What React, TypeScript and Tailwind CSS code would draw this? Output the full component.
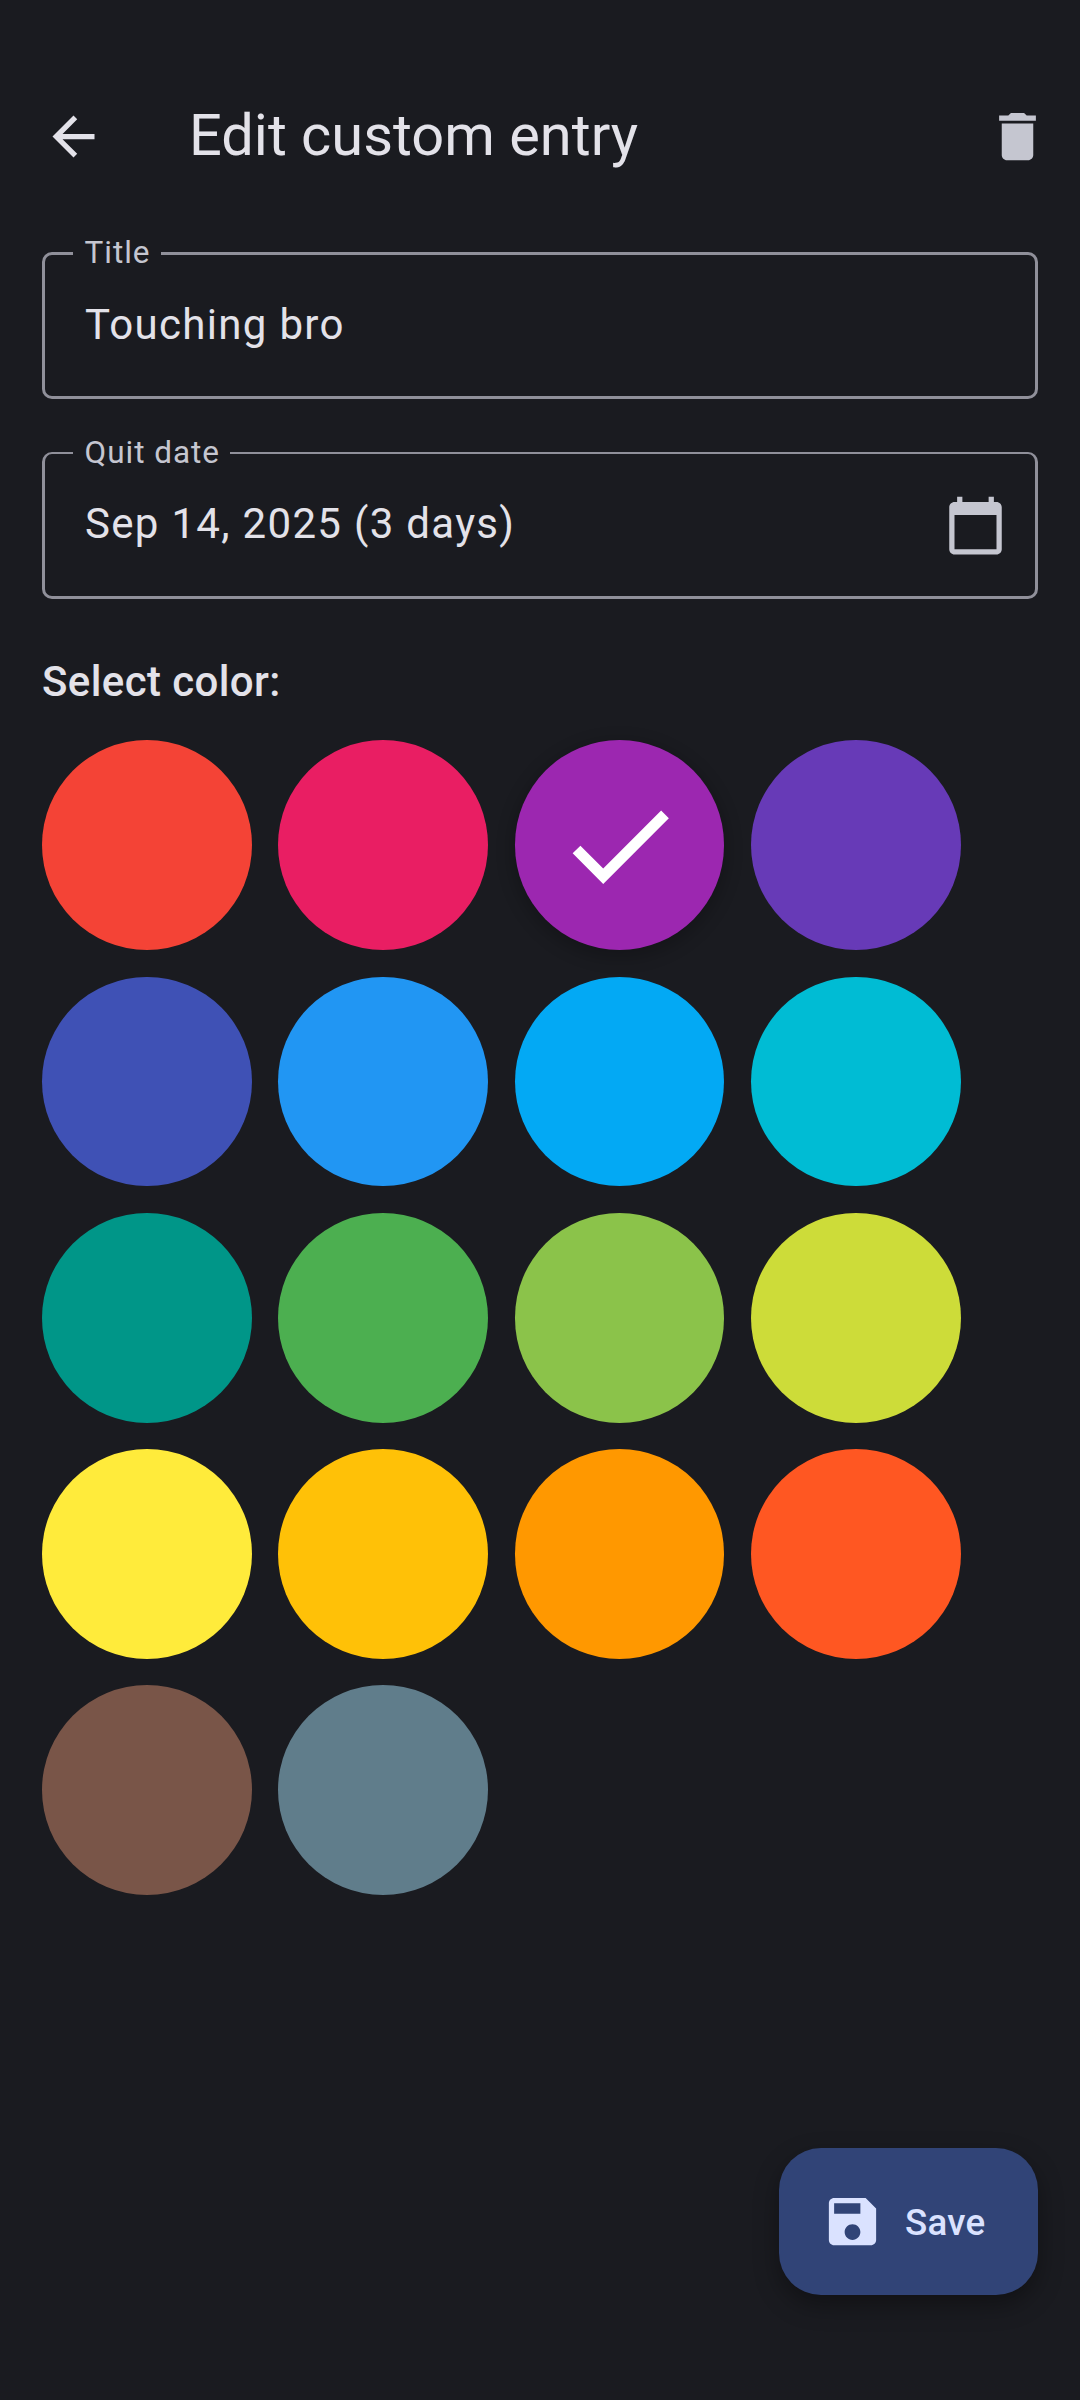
import type { ReactNode } from "react";

const swatches = [
  { name: "Red", color: "bg-[#f44336]" },
  { name: "Pink", color: "bg-[#e91e63]" },
  { name: "Purple", color: "bg-[#9c27b0]" },
  { name: "Deep purple", color: "bg-[#673ab7]" },
  { name: "Indigo", color: "bg-[#3f51b5]" },
  { name: "Blue", color: "bg-[#2196f3]" },
  { name: "Light blue", color: "bg-[#03a9f4]" },
  { name: "Cyan", color: "bg-[#00bcd4]" },
  { name: "Teal", color: "bg-[#009688]" },
  { name: "Green", color: "bg-[#4caf50]" },
  { name: "Light green", color: "bg-[#8bc34a]" },
  { name: "Lime", color: "bg-[#cddc39]" },
  { name: "Yellow", color: "bg-[#ffeb3b]" },
  { name: "Amber", color: "bg-[#ffc107]" },
  { name: "Orange", color: "bg-[#ff9800]" },
  { name: "Deep orange", color: "bg-[#ff5722]" },
  { name: "Brown", color: "bg-[#795548]" },
  { name: "Blue grey", color: "bg-[#607d8b]" },
];

const selected = "Purple";

function Icon({ d, className }: { d: string; className: string }) {
  return (
    <svg viewBox="0 0 24 24" fill="currentColor" className={className} aria-hidden="true">
      <path d={d} />
    </svg>
  );
}

type FieldProps = { label: string; border: string; notch: string; body: string; children: ReactNode };

function Field({ label, border, notch, body, children }: FieldProps) {
  return (
    <fieldset className={`h-[147px] min-w-0 rounded-[10px] border-[#90909a] ${border}`}>
      <legend
        className={`ml-[28px] flex items-center pr-[10px] pl-[11.5px] text-[31.5px] leading-none tracking-[0.98px] text-[#c5c6d0] ${notch}`}
      >
        <span className="whitespace-nowrap">{label}</span>
      </legend>
      <div
        className={`flex items-center justify-between pr-[28.5px] pl-[40px] text-[42px] leading-[63px] tracking-[1.31px] ${body}`}
      >
        {children}
      </div>
    </fieldset>
  );
}

export default function App() {
  return (
    <div className="flex h-[2400px] w-[1080px] flex-col bg-[#1a1b20] px-[42px] font-['Roboto',sans-serif] text-[#e3e2e9]">
      <header className="mt-[63px] flex h-[147px] items-center">
        <button aria-label="Back">
          <Icon className="size-[63px]" d="M20 11H7.83l5.59-5.59L12 4l-8 8 8 8 1.41-1.41L7.83 13H20v-2z" />
        </button>
        <h1 className="-mt-[3px] ml-[84px] flex-1 text-[57.75px] leading-[74px]">Edit custom entry</h1>
        <button aria-label="Delete" className="-mr-[10.5px] text-[#c5c6d0]">
          <Icon
            className="size-[63px]"
            d="M6 19c0 1.1.9 2 2 2h8c1.1 0 2-.9 2-2V7H6v12zM19 4h-3.5l-1-1h-5l-1 1H5v2h14V4z"
          />
        </button>
      </header>

      <div className="mt-[42px] flex flex-col gap-[53px]">
        <Field label="Title" border="border-3" notch="h-[3px] *:-mt-px" body="h-[138px]">
          <span>Touching bro</span>
        </Field>
        <Field label="Quit date" border="border-3 border-t-2" notch="h-[2px] *:-mt-px" body="h-[140px]">
          <span className="-mt-[2px]">Sep 14, 2025 (3 days)</span>
          <Icon
            className="mt-[2px] size-[63px] text-[#c5c6d0]"
            d="M20 3h-1V1h-2v2H7V1H5v2H4c-1.1 0-2 .9-2 2v16c0 1.1.9 2 2 2h16c1.1 0 2-.9 2-2V5c0-1.1-.9-2-2-2zm0 18H4V8h16v13z"
          />
        </Field>
      </div>

      <h2 className="mt-[51px] text-[42px] leading-[63px] font-medium tracking-[0.39px]">Select color:</h2>

      <div className="mt-[27.4px] flex flex-wrap gap-[26.25px]">
        {swatches.map((s) => (
          <button
            key={s.name}
            aria-label={s.name}
            className={`mr-[0.25px] mb-[0.25px] flex size-[209.75px] items-center justify-center rounded-full ${s.color} ${
              s.name === selected ? "shadow-[0_5px_16px_4px_rgba(0,0,0,0.2)]" : ""
            }`}
          >
            {s.name === selected && (
              <Icon
                className="size-[131.25px] text-white"
                d="M9 16.17 4.83 12l-1.42 1.41L9 19 21 7l-1.41-1.41z"
              />
            )}
          </button>
        ))}
      </div>

      <button className="mt-auto mb-[105px] flex h-[147px] w-[259px] items-center gap-[21px] self-end rounded-[42px] bg-[#314477] pl-[42px] text-[36.75px] leading-[53px] font-medium tracking-[0.26px] text-[#dae2ff] shadow-[0_10px_24px_0_rgba(0,0,0,0.35)]">
        <Icon
          className="size-[63px]"
          d="M17 3H5c-1.11 0-2 .9-2 2v14c0 1.1.89 2 2 2h14c1.1 0 2-.9 2-2V7l-4-4zm-5 16c-1.66 0-3-1.34-3-3s1.34-3 3-3 3 1.34 3 3-1.34 3-3 3zm3-10H5V5h10v4z"
        />
        <span className="mt-[2px]">Save</span>
      </button>
    </div>
  );
}
